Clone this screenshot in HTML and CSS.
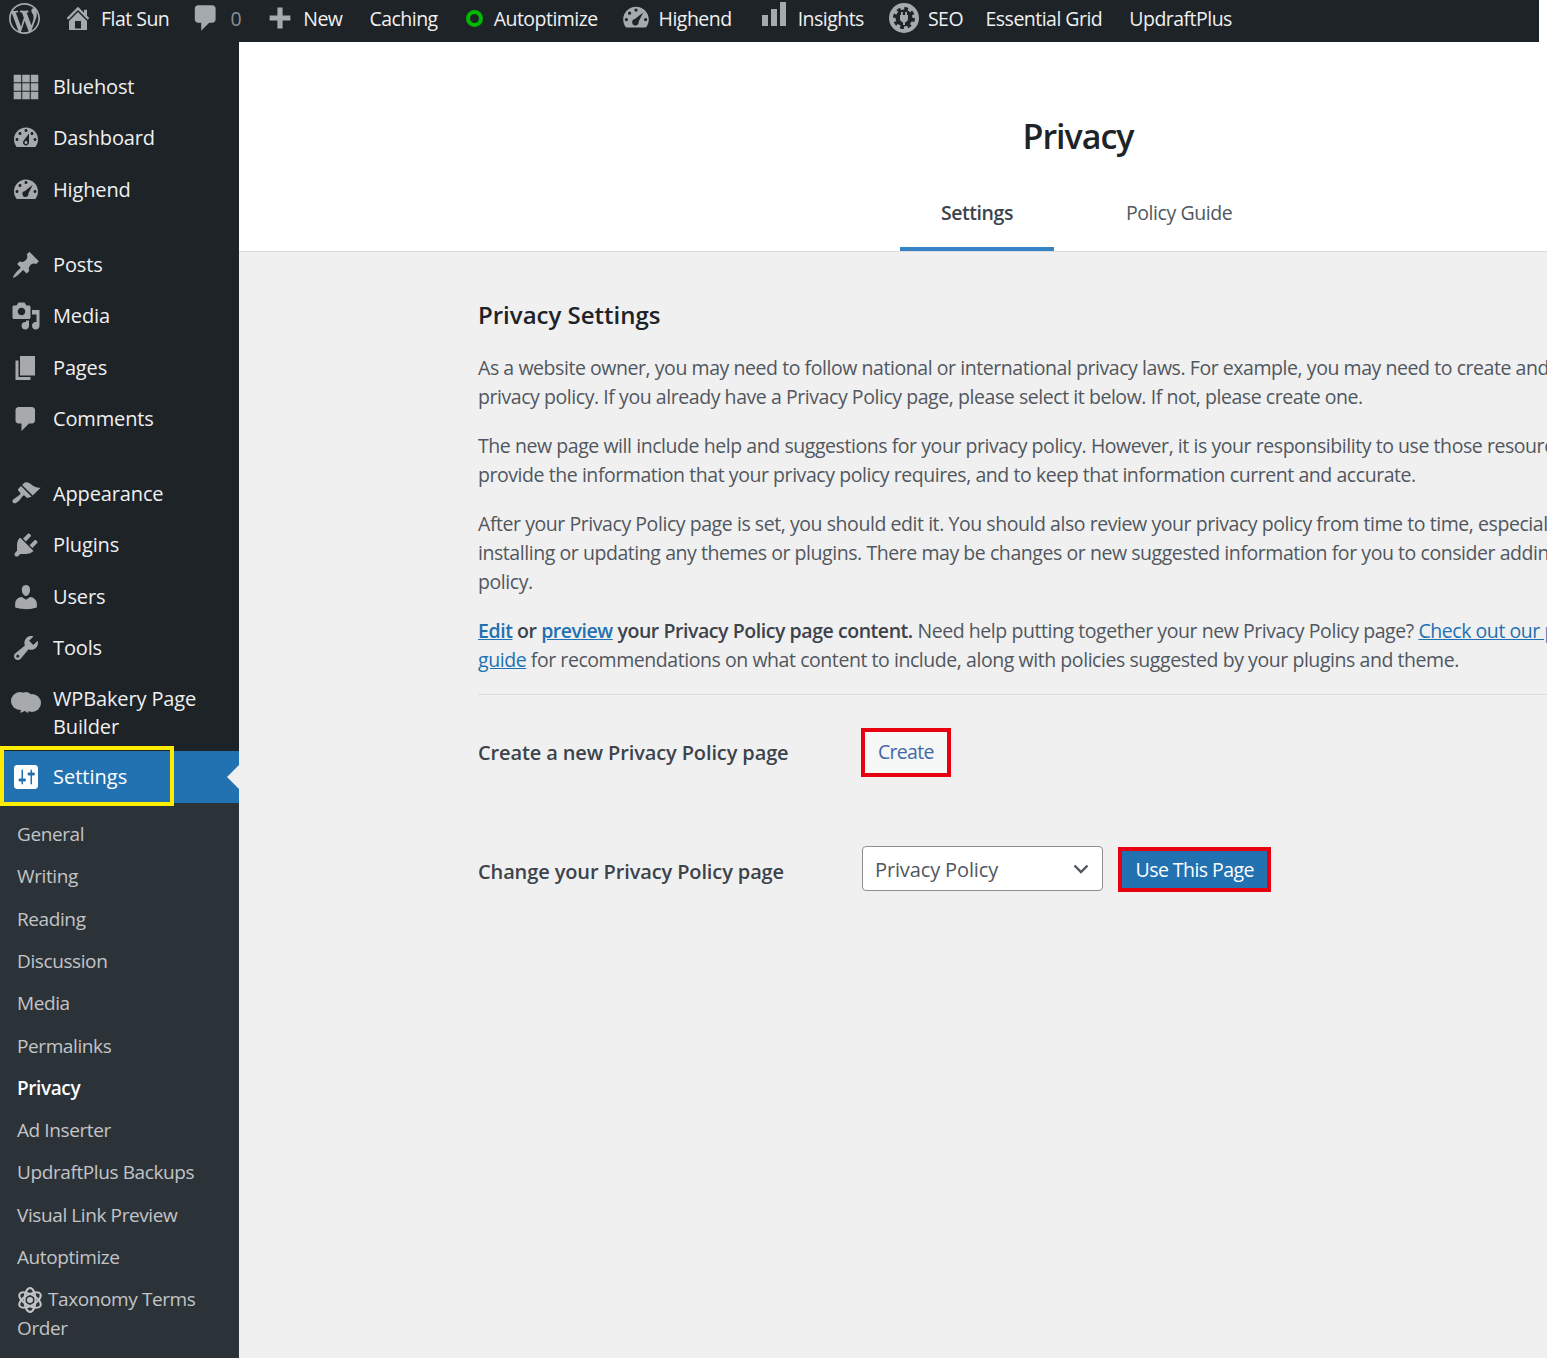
FILE: index.html
```html
<!DOCTYPE html>
<html lang="en" dir="ltr">
    <head>
        <meta charset="utf-8">
        <title>Privacy</title>
        <link rel="stylesheet" href="styles.css">
    </head>
    <body>
        <div class="adminbar">
            <a class="bar-item bar-logo"><svg class="bar-icon" viewBox="0 0 20 20"><path fill-rule="evenodd" d="M20 10c0-5.51-4.49-10-10-10C4.48 0 0 4.49 0 10c0 5.52 4.48 10 10 10 5.51 0 10-4.48 10-10zM7.78 15.37L4.37 6.22c.55-.02 1.17-.08 1.17-.08.5-.06.44-1.13-.06-1.11 0 0-1.45.11-2.37.11-.18 0-.37 0-.58-.01C4.12 2.69 6.87 1.11 10 1.11c2.33 0 4.45.87 6.05 2.34-.68-.11-1.65.39-1.65 1.58 0 .74.45 1.36.9 2.1.35.61.55 1.36.55 2.46 0 1.49-1.4 5-1.4 5l-3.03-8.37c.54-.02.82-.17.82-.17.5-.05.44-1.25-.06-1.22 0 0-1.44.12-2.38.12-.87 0-2.33-.12-2.33-.12-.5-.03-.56 1.2-.06 1.22l.92.08 1.26 3.41zM17.41 10c.24-.64.74-1.87.43-4.25.7 1.29 1.05 2.71 1.05 4.25 0 3.29-1.73 6.24-4.4 7.78.97-2.59 1.94-5.2 2.92-7.78zM6.1 18.09C3.12 16.65 1.11 13.53 1.11 10c0-1.3.23-2.48.72-3.59C3.25 10.3 4.67 14.2 6.1 18.09zm4.03-6.63l2.58 6.98c-.86.29-1.76.45-2.71.45-.79 0-1.57-.11-2.29-.33.81-2.38 1.62-4.74 2.42-7.1z"/></svg></a>
            <a class="bar-item bar-home"><svg class="bar-icon" viewBox="0 0 20 20"><path fill-rule="evenodd" d="M16 8.5l1.53 1.53-1.06 1.06L10 4.62l-6.47 6.47-1.06-1.06L10 2.5l4 4v-2h2v4zm-6-2.46l6 5.99V18H4v-5.97zM12 17v-5H8v5h4z"/></svg>Flat Sun</a>
            <a class="bar-item bar-comments"><svg class="bar-icon" viewBox="0 0 20 20"><path d="M5 2h9c1.1 0 2 .9 2 2v7c0 1.1-.9 2-2 2h-2l-5 5v-5H5c-1.1 0-2-.9-2-2V4c0-1.1.9-2 2-2z"/></svg><span class="bar-count">0</span></a>
            <a class="bar-item bar-new"><svg class="bar-icon" viewBox="0 0 20 20"><path d="M8 2h4v6h6v4h-6v6H8v-6H2V8h6z"/></svg>New</a>
            <a class="bar-item">Caching</a>
            <a class="bar-item bar-auto"><span class="green-ring"></span>Autoptimize</a>
            <a class="bar-item bar-highend"><svg class="bar-icon" viewBox="0 0 20 20"><path fill-rule="evenodd" d="M3.76 16h12.48c1.1-1.37 1.76-3.11 1.76-5 0-4.42-3.58-8-8-8s-8 3.58-8 8c0 1.89.66 3.63 1.76 5zM10 4c.55 0 1 .45 1 1s-.45 1-1 1-1-.45-1-1 .45-1 1-1zM6 6c.55 0 1 .45 1 1s-.45 1-1 1-1-.45-1-1 .45-1 1-1zM4 10c.55 0 1 .45 1 1s-.45 1-1 1-1-.45-1-1 .45-1 1-1zm12 0c.55 0 1 .45 1 1s-.45 1-1 1-1-.45-1-1 .45-1 1-1zM14.5 6.5L11.6 12.4a2 2 0 1 1-2.3-1.7z"/></svg>Highend</a>
            <a class="bar-item bar-insights"><svg class="bar-icon" viewBox="0 0 24 24"><path d="M0 13h6v11H0zM9 7h6v17H9zM18 0h6v24h-6z"/></svg>Insights</a>
            <a class="bar-item bar-seo">
                <svg class="bar-icon" viewBox="0 0 30 30">
                    <circle cx="15" cy="15" r="15"/>
                    <circle class="gear-teeth" cx="15" cy="15" r="9.500"/>
                    <circle class="gear-core" cx="15" cy="15" r="8.500"/>
                    <path d="M12 9h1.800v3h2.400V9H18v3h1v3.500a4 4 0 0 1-3 3.900V22h-2v-2.600a4 4 0 0 1-3-3.900V12h1z"/>
                </svg>SEO</a>
            <a class="bar-item bar-grid">Essential Grid</a>
            <a class="bar-item">UpdraftPlus</a>
        </div>

        <div class="layout">
            <div class="sidebar">
                <ul class="menu">
                    <li class="menu-item"><svg class="menu-icon" viewBox="0 0 20 20"><path d="M1.800 1.800h5v5h-5zM7.500 1.800h5v5h-5zM13.200 1.800h5v5h-5zM1.800 7.500h5v5h-5zM7.500 7.500h5v5h-5zM13.200 7.500h5v5h-5zM1.800 13.200h5v5h-5zM7.500 13.200h5v5h-5zM13.200 13.200h5v5h-5z"/></svg>Bluehost</li>
                    <li class="menu-item"><svg class="menu-icon" viewBox="0 0 20 20"><path fill-rule="evenodd" d="M3.760 16h12.480c1.100-1.370 1.760-3.110 1.760-5 0-4.420-3.580-8-8-8s-8 3.580-8 8c0 1.890.66 3.630 1.760 5zM10 4c.55 0 1 .45 1 1s-.45 1-1 1-1-.45-1-1 .45-1 1-1zM6 6c.55 0 1 .45 1 1s-.45 1-1 1-1-.45-1-1 .45-1 1-1zm8 0c.55 0 1 .45 1 1s-.45 1-1 1-1-.45-1-1 .45-1 1-1zm-5.370 5.550L12 7v6c0 1.100-.9 2-2 2s-2-.9-2-2c0-.57.24-1.080.63-1.450zM4 10c.55 0 1 .45 1 1s-.45 1-1 1-1-.45-1-1 .45-1 1-1zm12 0c.55 0 1 .45 1 1s-.45 1-1 1-1-.45-1-1 .45-1 1-1zm-5 3c0-.55-.45-1-1-1s-1 .45-1 1 .45 1 1 1 1-.45 1-1z"/></svg>Dashboard</li>
                    <li class="menu-item"><svg class="menu-icon" viewBox="0 0 20 20"><path fill-rule="evenodd" d="M3.760 16h12.480c1.100-1.370 1.760-3.110 1.760-5 0-4.420-3.580-8-8-8s-8 3.580-8 8c0 1.890.66 3.630 1.760 5zM10 4c.55 0 1 .45 1 1s-.45 1-1 1-1-.45-1-1 .45-1 1-1zM6 6c.55 0 1 .45 1 1s-.45 1-1 1-1-.45-1-1 .45-1 1-1zM4 10c.55 0 1 .45 1 1s-.45 1-1 1-1-.45-1-1 .45-1 1-1zm12 0c.55 0 1 .45 1 1s-.45 1-1 1-1-.45-1-1 .45-1 1-1zM14.500 6.500L11.600 12.400a2 2 0 1 1-2.300-1.700z"/></svg>Highend</li>
                    <li class="menu-sep"></li>
                    <li class="menu-item"><svg class="menu-icon" viewBox="0 0 20 20"><path d="M10.440 3.020l1.820-1.820 6.360 6.350-1.830 1.820c-1.050-.68-2.480-.57-3.410.36l-.75.75c-.92.93-1.040 2.350-.35 3.410l-1.830 1.820-2.410-2.410-2.800 2.790c-.42.42-3.380 2.710-3.800 2.290s1.860-3.390 2.280-3.810l2.790-2.790L4.100 9.360l1.830-1.820c1.050.69 2.480.57 3.400-.36l.75-.75c.93-.92 1.050-2.350.36-3.410z"/></svg>Posts</li>
                    <li class="menu-item"><svg class="menu-icon" viewBox="0 0 20 20"><path fill-rule="evenodd" d="M13 11V4c0-.55-.45-1-1-1h-1.670L9 1H5L3.670 3H2c-.55 0-1 .45-1 1v7c0 .55.45 1 1 1h10c.55 0 1-.45 1-1zM7 4.500c1.380 0 2.500 1.120 2.500 2.500S8.380 9.500 7 9.500 4.500 8.380 4.500 7 5.620 4.500 7 4.500zM14 6h5v10.500c0 1.380-1.120 2.500-2.500 2.500S14 17.880 14 16.500s1.120-2.500 2.500-2.500c.17 0 .34.02.5.05V9h-3V6zm-4 8.050V13h2v3.500c0 1.380-1.120 2.500-2.500 2.500S7 17.880 7 16.500 8.120 14 9.500 14c.17 0 .34.02.5.05z"/></svg>Media</li>
                    <li class="menu-item"><svg class="menu-icon" viewBox="0 0 20 20"><path d="M6 15V2h10v13H6zm-1 1h8v2H3V5h2v11z"/></svg>Pages</li>
                    <li class="menu-item"><svg class="menu-icon" viewBox="0 0 20 20"><path d="M5 2h9c1.100 0 2 .9 2 2v7c0 1.100-.9 2-2 2h-2l-5 5v-5H5c-1.100 0-2-.9-2-2V4c0-1.100.9-2 2-2z"/></svg>Comments</li>
                    <li class="menu-sep"></li>
                    <li class="menu-item"><svg class="menu-icon" viewBox="0 0 20 20"><path d="M14.480 11.060L7.410 3.990l1.500-1.500c.5-.56 2.300-.47 3.510.32 1.210.8 1.430 1.280 2.910 2.100 1.180.64 2.450 1.260 4.450.85zm-.71.71L6.700 4.700 4.930 6.470c-.39.39-.39 1.020 0 1.410l1.060 1.060c.39.39.39 1.030 0 1.420-.6.6-1.430 1.110-2.210 1.690-.35.26-.7.53-1.010.84C1.430 13.230.4 14.840 1.400 15.840c.99 1 2.600-.03 3.940-1.360.31-.31.58-.66.85-1.020.57-.78 1.080-1.600 1.690-2.210.39-.39 1.020-.39 1.410 0l1.060 1.060c.39.39 1.020.39 1.410 0z"/></svg>Appearance</li>
                    <li class="menu-item"><svg class="menu-icon" viewBox="0 0 20 20"><path d="M13.110 4.360L9.870 7.600 8 5.730l3.240-3.240c.35-.34 1.050-.2 1.560.32.52.51.66 1.210.31 1.550zm-8 1.770l.91-1.120 9.010 9.010-1.190.84c-.71.71-2.630 1.160-3.820 1.160H6.140L4.900 17.260c-.59.59-1.540.59-2.120 0-.59-.58-.59-1.530 0-2.120l1.240-1.240v-3.880c0-1.130.4-3.190 1.090-3.890zm7.260 3.970l3.240-3.240c.34-.35 1.040-.21 1.550.31.52.51.66 1.210.31 1.550l-3.240 3.250z"/></svg>Plugins</li>
                    <li class="menu-item"><svg class="menu-icon" viewBox="0 0 20 20"><path d="M10 9.250c-2.270 0-2.730-3.440-2.730-3.440C7 4.020 7.820 2 9.970 2c2.160 0 2.980 2.020 2.710 3.810 0 0-.41 3.440-2.680 3.440zm0 2.570L12.720 10c2.390 0 4.520 2.330 4.520 4.530v2.490s-3.650 1.130-7.240 1.130c-3.650 0-7.240-1.130-7.240-1.130v-2.490c0-2.250 1.940-4.480 4.470-4.480z"/></svg>Users</li>
                    <li class="menu-item"><svg class="menu-icon" viewBox="0 0 20 20"><path fill-rule="evenodd" d="M16.680 9.770c-1.340 1.340-3.300 1.670-4.950.99l-5.410 6.520c-.99.99-2.590.99-3.580 0s-.99-2.590 0-3.570l6.520-5.420c-.68-1.650-.35-3.610.99-4.950 1.280-1.280 3.120-1.620 4.720-1.060l-2.890 2.890 2.820 2.820 2.860-2.870c.53 1.580.18 3.390-1.080 4.650zM3.810 16.210c.4.39 1.040.39 1.430 0 .4-.4.4-1.040 0-1.440-.39-.39-1.030-.39-1.430 0-.39.4-.39 1.040 0 1.440z"/></svg>Tools</li>
                    <li class="menu-item menu-item-tall">
                        <svg class="menu-icon cloud-icon" viewBox="0 0 30 24"><circle cx="9" cy="9" r="9"/><circle cx="21" cy="11" r="9"/><circle cx="15" cy="6" r="6"/><path d="M9 15h10l-2 6-3-2-5 2 1-3z"/></svg>
                        <span>WPBakery Page<br>Builder</span>
                    </li>
                    <li class="menu-item menu-active">
                        <svg class="menu-icon" viewBox="0 0 20 20"><path fill-rule="evenodd" d="M18 16V4c0-1.100-.9-2-2-2H4c-1.100 0-2 .9-2 2v12c0 1.100.9 2 2 2h12c1.100 0 2-.9 2-2zM8 11h1c.55 0 1 .45 1 1s-.45 1-1 1H8v1.500c0 .28-.22.5-.5.5s-.5-.22-.5-.5V13H6c-.55 0-1-.45-1-1s.45-1 1-1h1V5.500c0-.28.22-.5.5-.5s.5.22.5.5V11zm5-2h-1c-.55 0-1-.45-1-1s.45-1 1-1h1V5.500c0-.28.22-.5.5-.5s.5.22.5.5V7h1c.55 0 1 .45 1 1s-.45 1-1 1h-1v5.500c0 .28-.22.5-.5.5s-.5-.22-.5-.5V9z"/></svg>Settings
                        <span class="yellow-box"></span>
                        <span class="menu-arrow"></span>
                    </li>
                </ul>
                <ul class="submenu">
                    <li>General</li>
                    <li>Writing</li>
                    <li>Reading</li>
                    <li>Discussion</li>
                    <li>Media</li>
                    <li>Permalinks</li>
                    <li class="sub-current">Privacy</li>
                    <li>Ad Inserter</li>
                    <li>UpdraftPlus Backups</li>
                    <li>Visual Link Preview</li>
                    <li>Autoptimize</li>
                    <li class="sub-tall"><svg class="atom" viewBox="0 0 26 26"><g fill="none" stroke="#c3c4c7" stroke-width="2"><ellipse cx="13" cy="13" rx="5.500" ry="12"/><ellipse cx="13" cy="13" rx="5.500" ry="12" transform="rotate(60 13 13)"/><ellipse cx="13" cy="13" rx="5.500" ry="12" transform="rotate(120 13 13)"/></g><circle cx="13" cy="13" r="3" fill="#c3c4c7"/></svg>Taxonomy Terms<br>Order</li>
                </ul>
            </div>

            <div class="main">
                <div class="head">
                    <h1 class="head-title">Privacy</h1>
                    <div class="tabs">
                        <a class="tab tab-active">Settings</a>
                        <a class="tab">Policy Guide</a>
                    </div>
                </div>
                <div class="body">
                    <h2 class="body-title">Privacy Settings</h2>
                    <p>As a website owner, you may need to follow national or international privacy laws. For example, you may need to create and display a<br>privacy policy. If you already have a Privacy Policy page, please select it below. If not, please create one.</p>
                    <p>The new page will include help and suggestions for your privacy policy. However, it is your responsibility to use those resources correctly, to<br>provide the information that your privacy policy requires, and to keep that information current and accurate.</p>
                    <p>After your Privacy Policy page is set, you should edit it. You should also review your privacy policy from time to time, especially after<br>installing or updating any themes or plugins. There may be changes or new suggested information for you to consider adding to your<br>policy.</p>
                    <p><strong><a>Edit</a> or <a>preview</a> your Privacy Policy page content.</strong> Need help putting together your new Privacy Policy page? <a>Check out our privacy policy</a><br><a>guide</a> for recommendations on what content to include, along with policies suggested by your plugins and theme.</p>
                    <hr class="rule">
                    <div class="form-row row-create">
                        <label class="form-label">Create a new Privacy Policy page</label>
                        <a class="btn-create">Create</a>
                    </div>
                    <div class="form-row row-change">
                        <label class="form-label">Change your Privacy Policy page</label>
                        <div class="fake-select">Privacy Policy
                            <svg class="chevron" viewBox="0 0 16 10"><path d="M1.500 1.500L8 8l6.500-6.500" fill="none" stroke="#50575e" stroke-width="2.400"/></svg>
                        </div>
                        <a class="btn-use">Use This Page</a>
                    </div>
                </div>
            </div>
        </div>
    </body>
</html>
```
FILE: styles.css
```css
html, body {
    margin: 0;
    height: 1358px;
    overflow: hidden;
    background: #fff;
}

body {
    font-family: "Open Sans", "Noto Sans", sans-serif;
    font-size: 19.500px;
    letter-spacing: -0.44px;
    color: #50575e;
}

ul {
    margin: 0;
    padding: 0;
    list-style: none;
}

.adminbar {
    display: flex;
    align-items: center;
    width: 1539px;
    height: 42px;
    padding-bottom: 6px;
    box-sizing: border-box;
    background: #1d2327;
    color: #f0f0f1;
    letter-spacing: -0.52px;
    white-space: nowrap;
}

.bar-item {
    display: flex;
    align-items: center;
    padding: 0 13.500px;
}

.bar-icon {
    fill: #a7aaad;
    width: 30px;
    height: 30px;
    flex: none;
    margin-right: 6px;
}

.bar-logo {
    padding: 0 0 0 9px;
}

.bar-logo .bar-icon {
    width: 31px;
    height: 31px;
    margin: 0 10px 0 0;
}

.bar-home {
    padding-left: 13px;
}

.bar-home .bar-icon {
    margin-right: 8px;
}

.bar-comments {
    padding-left: 7.700px;
}

.bar-comments .bar-icon {
    width: 32px;
    height: 32px;
    margin-right: 8px;
}

.bar-count {
    color: #8c8f94;
}

.bar-new {
    padding-left: 12px;
}

.bar-new .bar-icon {
    width: 26px;
    height: 26px;
    margin-right: 10.600px;
}

.green-ring {
    width: 9px;
    height: 9px;
    margin: 0 11px 0 1px;
    border: 4px solid #00ba00;
    border-radius: 50%;
}

.bar-highend {
    padding-left: 8.300px;
}

.bar-highend .bar-icon {
    width: 32px;
    height: 32px;
    margin-right: 7px;
}

.bar-insights .bar-icon {
    width: 24px;
    height: 24px;
    margin: -8px 12px 0 3px;
}

.bar-seo {
    padding-left: 11.500px;
}

.bar-seo .bar-icon {
    margin-right: 9px;
}

.gear-teeth {
    fill: none;
    stroke: #1d2327;
    stroke-width: 3;
    stroke-dasharray: 3.700 3.760;
}

.gear-core {
    fill: #1d2327;
}

.bar-grid {
    padding-left: 9px;
}

.layout {
    display: flex;
    height: 1316px;
}

.sidebar {
    flex: none;
    width: 239px;
    background: #2c3338;
    color: #f0f0f1;
    overflow: hidden;
}

.menu {
    padding-top: 19.400px;
    background: #1d2327;
    font-size: 20px;
    letter-spacing: -0.14px;
}

.menu-item {
    position: relative;
    display: flex;
    align-items: center;
    height: 51.400px;
    padding-left: 11px;
    line-height: 28px;
}

.menu-icon {
    fill: #a7aaad;
    width: 30px;
    height: 30px;
    flex: none;
    margin-right: 12px;
}

.menu-sep {
    height: 23.600px;
}

.menu-item-tall {
    height: 77px;
}

.menu-item-tall span {
    padding-top: 2px;
}

.cloud-icon {
    align-self: flex-start;
    margin-top: 15px;
}

.menu-active {
    height: 52px;
    background: #2271b1;
    color: #fff;
    letter-spacing: 0;
}

.menu-active .menu-icon {
    fill: #fff;
}

.yellow-box {
    position: absolute;
    left: 0;
    top: -5px;
    width: 166px;
    height: 52px;
    border: 4px solid #ffed00;
}

.menu-arrow {
    position: absolute;
    right: 0;
    top: 14px;
    border: 12px solid transparent;
    border-right-color: #f0f0f1;
    border-left-width: 0;
}

.submenu {
    padding-top: 10px;
    color: #c3c4c7;
    font-size: 19px;
    letter-spacing: -0.4px;
}

.submenu li {
    display: flex;
    align-items: center;
    height: 42.300px;
    padding-left: 17px;
}

.submenu .sub-current {
    color: #fff;
    font-weight: 600;
}

.submenu .sub-tall {
    display: block;
    height: auto;
    padding-top: 7px;
    line-height: 29px;
}

.atom {
    width: 26px;
    height: 26px;
    margin-right: 5px;
    vertical-align: -7px;
}

.main {
    flex: none;
    width: 1678px;
    background: #f0f0f1;
}

.head {
    height: 209px;
    background: #fff;
    border-bottom: 1px solid #dcdcde;
}

.head-title {
    margin: 0;
    padding-top: 70px;
    text-align: center;
    font-size: 34px;
    font-weight: 600;
    letter-spacing: -1px;
    line-height: 48px;
    color: #1d2327;
}

.tabs {
    display: flex;
    margin-top: 29px;
    padding-left: 661px;
}

.tab {
    height: 62px;
    padding: 0 41px;
    line-height: 48px;
    box-sizing: border-box;
    border-bottom: 4px solid transparent;
}

.tab + .tab {
    margin-left: 31px;
}

.tab-active {
    border-bottom-color: #3582c4;
    color: #3c434a;
    font-weight: 600;
}

.body {
    width: 1200px;
    margin: 0 auto;
    white-space: nowrap;
}

.body-title {
    margin: 0;
    padding-top: 44px;
    font-size: 24px;
    font-weight: 600;
    letter-spacing: 0;
    line-height: 38px;
    color: #1d2327;
}

.body p {
    margin: 20px 0 0;
    line-height: 29px;
}

.body-title + p {
    margin-top: 19px;
}

.body strong {
    font-weight: 600;
    color: #3c434a;
}

.body a {
    color: #2271b1;
    text-decoration: underline;
}

.rule {
    height: 1px;
    margin: 20px 0 0;
    border: 0;
    background: #dcdcde;
}

.form-row {
    display: flex;
    align-items: center;
}

.form-label {
    flex: none;
    width: 384px;
    font-size: 20px;
    font-weight: 600;
    letter-spacing: -0.12px;
    color: #3c434a;
}

.row-create {
    margin-top: 33px;
}

.row-change {
    margin-top: 68px;
}

.row-change .form-label {
    padding-top: 5px;
}

.body .btn-create {
    margin-left: -1px;
    padding: 0 13px;
    height: 41px;
    line-height: 39px;
    border: 4px solid #e8000f;
    background: #f6f7f7;
    color: #4468a6;
    letter-spacing: -0.7px;
    text-decoration: none;
}

.fake-select {
    display: flex;
    align-items: center;
    justify-content: space-between;
    width: 241px;
    height: 45px;
    padding: 1px 13px 0 12px;
    box-sizing: border-box;
    border: 1px solid #8c8f94;
    border-radius: 4px;
    background: #fff;
    font-size: 20px;
    letter-spacing: -0.13px;
}

.chevron {
    width: 16px;
    height: 10px;
}

.body .btn-use {
    margin: 2px 0 0 15px;
    padding: 0 13.500px;
    height: 37px;
    line-height: 37px;
    border: 4px solid #e8000f;
    background: #2271b1;
    color: #fff;
    letter-spacing: -0.55px;
    text-decoration: none;
}
```
